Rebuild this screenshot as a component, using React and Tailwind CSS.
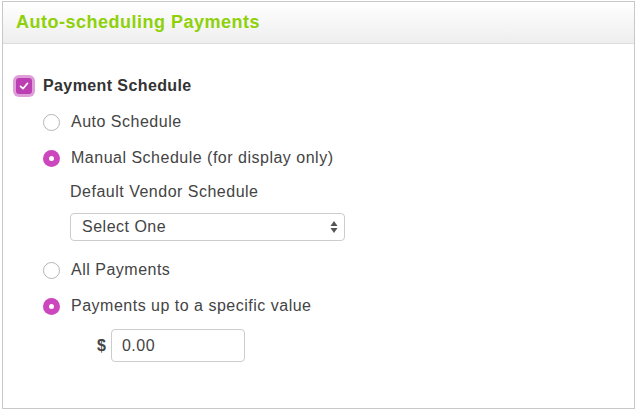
import React from "react";

function Radio({ checked }) {
  if (checked) {
    return (
      <span className="flex h-[17px] w-[17px] shrink-0 items-center justify-center rounded-full bg-[#cc47be]">
        <span className="h-[5px] w-[5px] rounded-full bg-white" />
      </span>
    );
  }
  return <span className="block h-[17px] w-[17px] shrink-0 rounded-full border border-[#b5b5b5] bg-white" />;
}

function RadioRow({ checked, label }) {
  return (
    <div className="flex h-[36px] items-center pl-[40px]">
      <Radio checked={checked} />
      <span className="ml-[11px] text-[16px] tracking-[0.5px] text-[#444]">{label}</span>
    </div>
  );
}

export default function App() {
  return (
    <div className="h-[411px] w-[638px] bg-white pl-[2px] pt-[1px]" style={{ fontFamily: '"Liberation Sans", Arial, sans-serif' }}>
      <div className="flex h-[408px] w-[633px] flex-col border border-[#c8c8c8] bg-white">
        <div className="flex h-[42px] shrink-0 items-center border-b border-[#dddddd] bg-gradient-to-b from-white to-[#eeeeee] pl-[13px]">
          <span className="text-[18px] font-bold tracking-[0.5px] text-[#8ed10a]">Auto-scheduling Payments</span>
        </div>
        <div className="flex flex-col pt-[24px]">
          <div className="flex h-[36px] items-center pl-[13px]">
            <span className="flex h-[16px] w-[16px] items-center justify-center rounded-[3px] bg-[#bb3fb3] shadow-[0_0_0_3px_rgba(195,80,185,0.55)]">
              <svg width="12" height="12" viewBox="0 0 12 12" fill="none">
                <path d="M2.5 6.3 L5 8.7 L9.5 3.3" stroke="white" strokeWidth="1.7" strokeLinecap="round" strokeLinejoin="round" />
              </svg>
            </span>
            <span className="ml-[11px] text-[16px] font-bold tracking-[0.4px] text-[#333]">Payment Schedule</span>
          </div>
          <RadioRow checked={false} label="Auto Schedule" />
          <RadioRow checked={true} label="Manual Schedule (for display only)" />
          <div className="flex h-[32px] items-center pl-[67px] text-[16px] tracking-[0.5px] text-[#444]">Default Vendor Schedule</div>
          <div className="ml-[67px] mt-[5px] flex h-[28px] w-[275px] items-center justify-between rounded-[4px] border border-[#cccccc] bg-white pl-[11px] pr-[6px]">
            <span className="text-[16px] tracking-[0.5px] text-[#444]">Select One</span>
            <svg width="8" height="14" viewBox="0 0 8 14">
              <path d="M4 1 L7.5 6 L0.5 6 Z" fill="#555" />
              <path d="M4 13 L7.5 8 L0.5 8 Z" fill="#555" />
            </svg>
          </div>
          <div className="mt-[11px]">
            <RadioRow checked={false} label="All Payments" />
            <RadioRow checked={true} label="Payments up to a specific value" />
          </div>
          <div className="mt-[5px] flex items-center pl-[94px]">
            <span className="text-[16px] font-bold text-[#444]">$</span>
            <div className="ml-[5px] flex h-[33px] w-[134px] items-center rounded-[4px] border border-[#cccccc] bg-white pl-[10px]">
              <span className="text-[16px] tracking-[0.5px] text-[#444]">0.00</span>
            </div>
          </div>
        </div>
      </div>
    </div>
  );
}
